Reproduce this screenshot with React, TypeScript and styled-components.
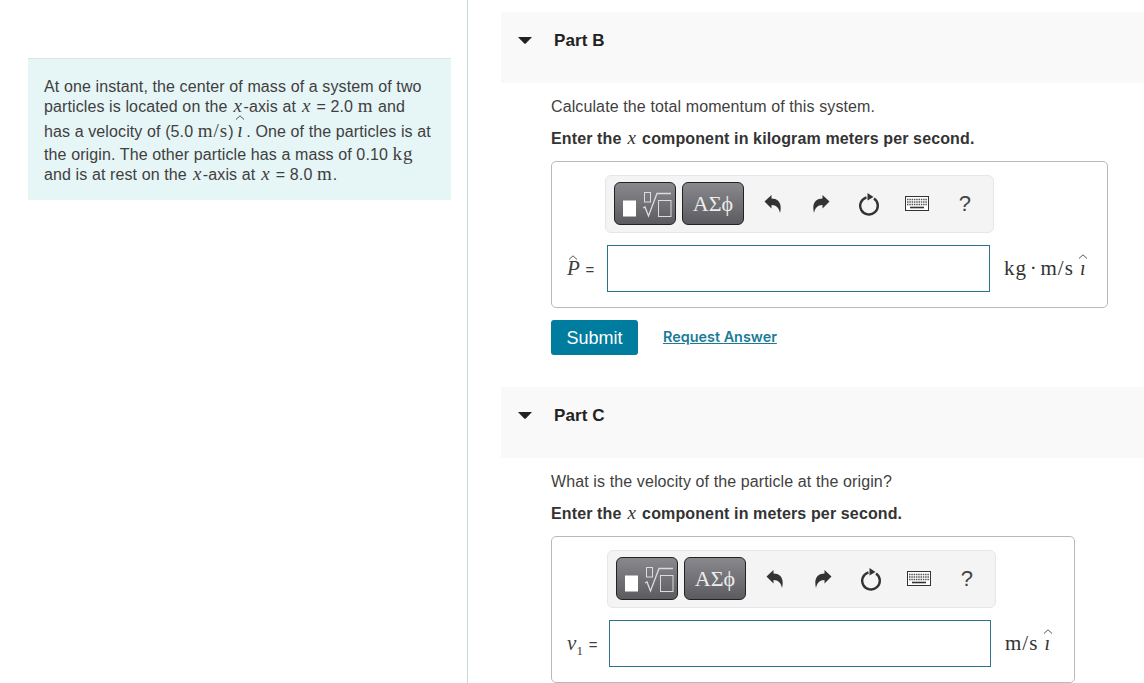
import React from "react";
import styled, { createGlobalStyle } from "styled-components";

const GlobalStyle = createGlobalStyle`
  html, body {
    margin: 0;
    padding: 0;
    background: #fff;
    overflow: hidden;
  }
  body {
    font: 16px/20px "Liberation Sans", Arial, sans-serif;
    letter-spacing: 0.11px;
    color: #3f3f3f;
  }
`;

const CaretDown = () => (
  <svg width="14" height="7" viewBox="0 0 14 7">
    <path d="M0.500 0H13.500Q14 0 13.600 .5L7.500 6.700Q7 7 6.500 6.700L.4 .5Q0 0 .5 0Z" fill="#222" />
  </svg>
);

const SqrtIcon = () => (
  <svg width="54" height="34" viewBox="0 0 54 34" fill="none" stroke="#dcdcdc">
    <rect x="5" y="13.500" width="13" height="16" fill="#fff" stroke="none" />
    <rect x="26.500" y="5.500" width="6" height="9.500" />
    <path d="M25 21l2-1 3.500 9L39 6.500H53" strokeWidth="1.300" />
    <rect x="40.500" y="13.500" width="12.500" height="16" />
  </svg>
);

const UndoIcon = () => (
  <svg width="18" height="20" viewBox="0 0 18 20">
    <path d="M0.500 7.500L7.500 1V4.500C14 4.500 18.500 9 16 19C15 14 12.500 11 7.500 11V14.500Z" fill="#333" />
  </svg>
);

const RedoIcon = () => (
  <svg width="18" height="20" viewBox="0 0 18 20">
    <path d="M17.500 7.500L10.500 1V4.500C4 4.500 -0.500 9 2 19C3 14 5.500 11 10.500 11V14.500Z" fill="#333" />
  </svg>
);

const ResetIcon = () => (
  <svg width="22" height="24" viewBox="0 0 22 24" fill="none">
    <path d="M8.500 5.300A8.800 8.800 0 1 0 16 6.500" stroke="#333" strokeWidth="2.400" />
    <path d="M9.500 1L15.500 5L9.500 8.500Z" fill="#333" />
  </svg>
);

const KeyboardIcon = () => (
  <svg width="24" height="15" viewBox="0 0 24 15" fill="none">
    <rect x="0.500" y="0.500" width="23" height="14" fill="#fff" stroke="#333" />
    <path d="M2 3.500H22M2 6H22M2 8.500H22" stroke="#555" strokeWidth="1.400" strokeDasharray="1.500 .8" />
    <path d="M5 11.500H19" stroke="#333" strokeWidth="1.600" />
  </svg>
);

const Hat = ({ children, top }: { children: React.ReactNode; top: number }) => (
  <HatWrap>
    <HatMark $top={top} width="9" height="5" viewBox="0 0 9 5">
      <path d="M0.500 4.500L4.500 0.800L8.500 4.500" fill="none" stroke="#444" strokeWidth="0.900" />
    </HatMark>
    {children}
  </HatWrap>
);

interface AnswerProps {
  label: React.ReactNode;
  unit: React.ReactNode;
  boxWidth: number;
  labelWidth: number;
  inputWidth: number;
}

const Answer = ({ label, unit, boxWidth, labelWidth, inputWidth }: AnswerProps) => (
  <AnswerBox $width={boxWidth}>
    <Toolbar $offset={labelWidth - 2}>
      <TemplateButtons>
        <MathButton>
          <SqrtIcon />
        </MathButton>
        <MathButton>
          <Greek>ΑΣϕ</Greek>
        </MathButton>
      </TemplateButtons>
      <ToolIcons>
        <ToolIcon><UndoIcon /></ToolIcon>
        <ToolIcon><RedoIcon /></ToolIcon>
        <ToolIcon><ResetIcon /></ToolIcon>
        <ToolIcon><KeyboardIcon /></ToolIcon>
        <Help>?</Help>
      </ToolIcons>
    </Toolbar>
    <InputRow>
      <InputLabel $width={labelWidth}>
        {label} <Equals>=</Equals>
      </InputLabel>
      <AnswerInput $width={inputWidth} />
      <Unit>{unit}</Unit>
    </InputRow>
  </AnswerBox>
);

const App = () => (
  <Page>
    <GlobalStyle />
    <LeftColumn>
      <Intro>
        <IntroLine>At one instant, the center of mass of a system of two</IntroLine>
        <IntroLine>
          particles is located on the <MathItalic>x</MathItalic>-axis at <MathItalic>x</MathItalic> = 2.0 <MathUnit>m</MathUnit> and
        </IntroLine>
        <IntroLine $gap={3}>
          has a velocity of (5.0 <MathUnit>m/s</MathUnit>)<Hat top={-5}><UnitVector>ı</UnitVector></Hat>. One of the particles is at
        </IntroLine>
        <IntroLine $gap={5}>
          the origin. The other particle has a mass of 0.10 <MathUnit>kg</MathUnit>
        </IntroLine>
        <IntroLine>
          and is at rest on the <MathItalic>x</MathItalic>-axis at <MathItalic>x</MathItalic> = 8.0 <MathUnit>m</MathUnit>.
        </IntroLine>
      </Intro>
    </LeftColumn>
    <RightColumn>
      <PartHeader>
        <CaretDown />
        <PartTitle>Part B</PartTitle>
      </PartHeader>
      <PartBody>
        <Prompt>Calculate the total momentum of this system.</Prompt>
        <Instruction>
          Enter the <MathItalic>x</MathItalic> component in kilogram meters per second.
        </Instruction>
        <Answer
          boxWidth={557}
          labelWidth={40}
          inputWidth={383}
          label={<Hat top={-3}><MathSymbol>P</MathSymbol></Hat>}
          unit={<>kg · m/s <Hat top={-4}><UnitVector>ı</UnitVector></Hat></>}
        />
        <Actions>
          <SubmitButton>Submit</SubmitButton>
          <RequestLink href="#">Request Answer</RequestLink>
        </Actions>
      </PartBody>
      <PartHeader>
        <CaretDown />
        <PartTitle>Part C</PartTitle>
      </PartHeader>
      <PartBody>
        <Prompt>What is the velocity of the particle at the origin?</Prompt>
        <Instruction>
          Enter the <MathItalic>x</MathItalic> component in meters per second.
        </Instruction>
        <Answer
          boxWidth={524}
          labelWidth={42}
          inputWidth={382}
          label={<MathSymbol>v<sub>1</sub></MathSymbol>}
          unit={<>m/s <Hat top={-4}><UnitVector>ı</UnitVector></Hat></>}
        />
      </PartBody>
    </RightColumn>
  </Page>
);

const Page = styled.div`
  display: grid;
  grid-template-columns: 468px 1fr;
  height: 683px;
  overflow: hidden;
`;

const LeftColumn = styled.aside`
  border-right: 1px solid #c9dadd;
  padding: 58px 16px 0 28px;
`;

const Intro = styled.section`
  box-sizing: border-box;
  height: 142px;
  padding: 18px 0 0 16px;
  background: #e6f5f6;
  border-top: 1px solid #d6e6e6;
`;

const IntroLine = styled.div<{ $gap?: number }>`
  height: 20px;
  margin-top: ${({ $gap }) => $gap ?? 0}px;
  white-space: nowrap;
`;

const MathItalic = styled.i`
  padding: 0 1.500px;
  font-family: "Liberation Serif", "Times New Roman", serif;
  font-size: 19px;
  font-weight: 400;
  line-height: 0;
  letter-spacing: 0;
`;

const UnitVector = styled.i`
  padding: 0 3.500px;
  font-family: "Liberation Serif", "Times New Roman", serif;
  font-size: 20px;
  line-height: 1;
`;

const MathSymbol = styled.span`
  font: italic 21px/20px "Liberation Serif", "Times New Roman", serif;

  sub {
    font-size: 13px;
    font-style: normal;
    line-height: 0;
  }
`;

const MathUnit = styled.span`
  font-family: "Liberation Serif", "Times New Roman", serif;
  font-size: 19px;
  line-height: 0;
  letter-spacing: 1px;
`;

const HatWrap = styled.span`
  position: relative;
  display: inline-block;
  line-height: 1;
`;

const HatMark = styled.svg<{ $top: number }>`
  position: absolute;
  left: 50%;
  top: ${({ $top }) => $top}px;
  transform: translateX(-50%);
`;

const RightColumn = styled.main`
  padding: 12px 0 0 33px;
`;

const PartHeader = styled.header`
  display: flex;
  align-items: center;
  gap: 22px;
  box-sizing: border-box;
  height: 71px;
  padding: 0 0 14px 17px;
  background: #f9f9f9;
`;

const PartTitle = styled.h2`
  margin: 0;
  font-size: 17px;
  font-weight: 700;
  line-height: 20px;
  color: #222;
`;

const PartBody = styled.div`
  padding: 14px 0 0 50px;
`;

const Prompt = styled.p`
  margin: 0 0 12px;
`;

const Instruction = styled.p`
  margin: 0 0 12px;
  font-weight: 700;
  letter-spacing: 0.13px;
  color: #333;
`;

const AnswerBox = styled.div<{ $width: number }>`
  box-sizing: border-box;
  width: ${({ $width }) => $width}px;
  padding: 13px 0 15px 15px;
  border: 1px solid #b9b9b9;
  border-radius: 5px;
`;

const Toolbar = styled.div<{ $offset: number }>`
  display: flex;
  align-items: center;
  box-sizing: border-box;
  width: 389px;
  height: 58px;
  margin-left: ${({ $offset }) => $offset}px;
  padding: 0 0 1px 8px;
  background: #f4f4f4;
  border: 1px solid #e6e6e6;
  border-radius: 6px;
`;

const TemplateButtons = styled.div`
  display: flex;
  gap: 6px;
`;

const MathButton = styled.div`
  display: flex;
  align-items: center;
  justify-content: center;
  box-sizing: border-box;
  width: 62px;
  height: 43px;
  background: linear-gradient(#89898d, #5c5c60);
  border: 1px solid #222;
  border-radius: 6px;
`;

const Greek = styled.span`
  font: 22px/24px "Liberation Serif", serif;
  color: #ececec;
`;

const ToolIcons = styled.div`
  display: flex;
  flex: 1;
  align-items: center;
  margin-left: 5px;
`;

const ToolIcon = styled.div`
  display: flex;
  align-items: center;
  justify-content: center;
  width: 48px;
  height: 30px;
`;

const Help = styled(ToolIcon)`
  font-size: 22px;
  color: #444;
`;

const InputRow = styled.div`
  display: flex;
  align-items: center;
  margin-top: 12px;
`;

const InputLabel = styled.div<{ $width: number }>`
  box-sizing: border-box;
  width: ${({ $width }) => $width}px;
  white-space: nowrap;
`;

const Equals = styled.span`
  margin-left: 1px;
  font-size: 15px;
`;

const AnswerInput = styled.input<{ $width: number }>`
  box-sizing: border-box;
  width: ${({ $width }) => $width}px;
  height: 47px;
  padding: 0 8px;
  background: #fff;
  border: 1px solid #28748a;
  border-radius: 0;
  outline: none;
`;

const Unit = styled.div`
  margin-left: 14px;
  font: 21px/20px "Liberation Serif", serif;
  letter-spacing: 1px;
  word-spacing: -3.500px;
  color: #333;
  white-space: nowrap;
`;

const Actions = styled.div`
  display: flex;
  align-items: center;
  gap: 25px;
  margin-top: 12px;
  margin-bottom: 32px;
`;

const SubmitButton = styled.button`
  width: 87px;
  height: 35px;
  padding: 0;
  font: 18px/20px "Liberation Sans", Arial, sans-serif;
  color: #fff;
  background: #007c9e;
  border: none;
  border-radius: 3px;
`;

const RequestLink = styled.a`
  margin-bottom: 2px;
  font: 600 14.4px/20px Inter, "Liberation Sans", sans-serif;
  letter-spacing: 0;
  color: #1b7b96;
  text-decoration: underline;
`;

export default App;
